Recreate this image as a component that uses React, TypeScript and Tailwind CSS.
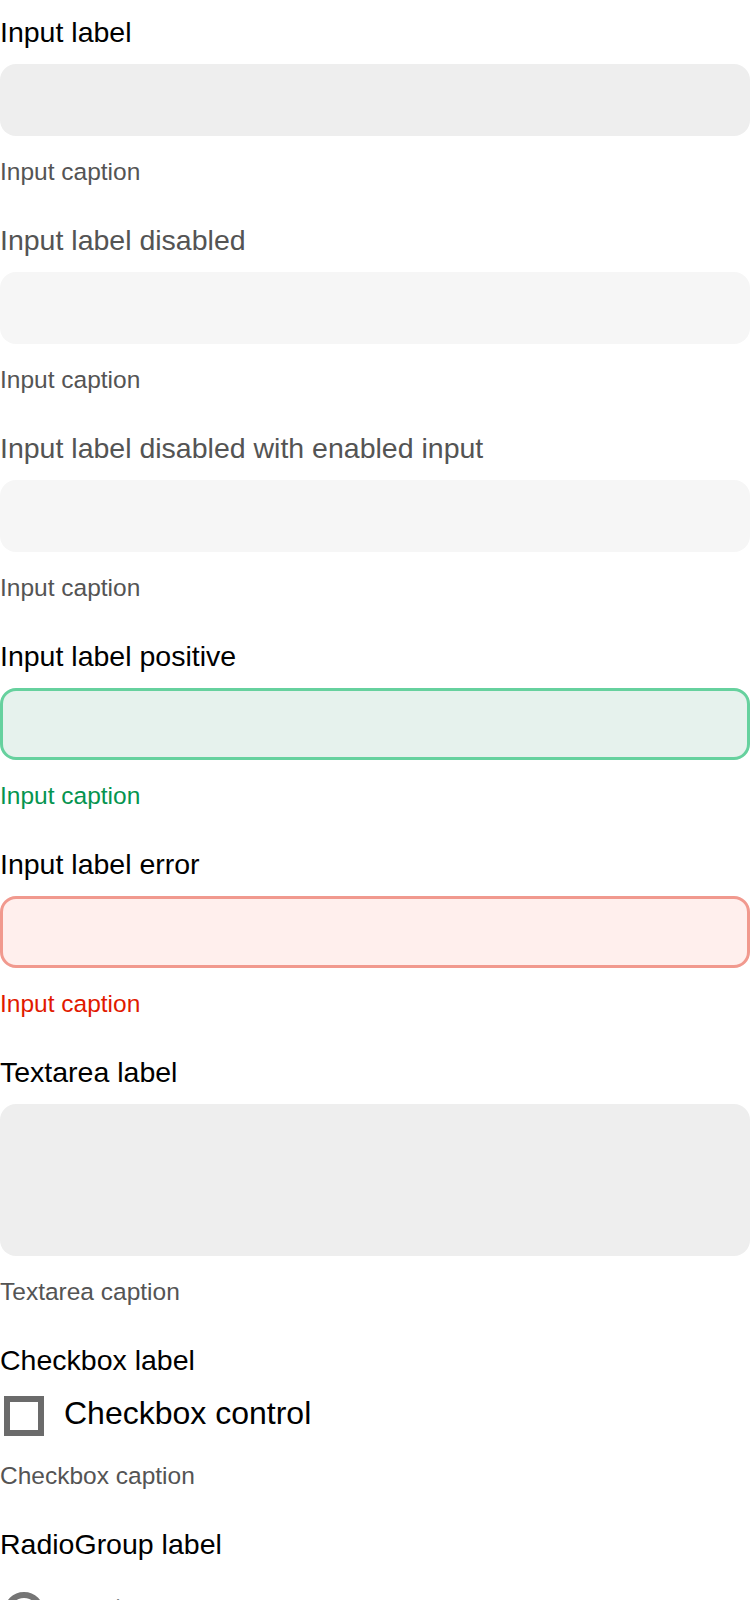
import React from 'react';

type FieldProps = {
  label: string;
  caption: string;
  labelColor?: string;
  captionColor?: string;
  children: React.ReactNode;
};

const Field = ({ label, caption, labelColor = 'text-black', captionColor = 'text-[#545454]', children }: FieldProps) => {
  return (
    <div className="mb-[32px]">
      {/* Label */}
      <label className={`block text-[28.5px] leading-[32px] mb-[16px] ${labelColor}`}>{label}</label>

      {children}

      {/* Caption */}
      <div className={`mt-[16px] text-[24.5px] leading-[40px] ${captionColor}`}>{caption}</div>
    </div>
  );
};

const inputBase = 'block w-full h-[72px] rounded-[16px] outline-none px-[28px] text-[28px]';

export default function App() {
  return (
    <div className="pt-[16px] bg-white font-['Liberation_Sans',Arial,sans-serif] text-black">
      <Field label="Input label" caption="Input caption">
        <input className={`${inputBase} bg-[#eeeeee]`} />
      </Field>

      <Field label="Input label disabled" caption="Input caption" labelColor="text-[#545454]">
        <input disabled className={`${inputBase} bg-[#f6f6f6]`} />
      </Field>

      <Field label="Input label disabled with enabled input" caption="Input caption" labelColor="text-[#545454]">
        <input className={`${inputBase} bg-[#f6f6f6]`} />
      </Field>

      <Field label="Input label positive" caption="Input caption" captionColor="text-[#05944f]">
        <input className={`${inputBase} bg-[#e6f2ed] border-[3px] border-[#66d19e]`} />
      </Field>

      <Field label="Input label error" caption="Input caption" captionColor="text-[#e11900]">
        <input className={`${inputBase} bg-[#ffefed] border-[3px] border-[#f1998e]`} />
      </Field>

      <Field label="Textarea label" caption="Textarea caption">
        <textarea className="block w-full h-[152px] rounded-[16px] bg-[#eeeeee] outline-none resize-none p-[20px] text-[28px]" />
      </Field>

      <Field label="Checkbox label" caption="Checkbox caption">
        <div className="flex items-start">
          <span className="m-[4px] w-[40px] h-[40px] shrink-0 border-[6px] border-[#6b6b6b] bg-white" />
          <span className="ml-[16px] pt-[1px] text-[32px] leading-[40px]">Checkbox control</span>
        </div>
      </Field>

      <Field label="RadioGroup label" caption="RadioGroup caption">
        <div className="flex flex-col">
          {['custom', 'second', 'third'].map((r) => (
            <div key={r} className="flex items-start mt-[12px]">
              <span className="m-[4px] w-[40px] h-[40px] shrink-0 rounded-full border-[6px] border-[#757575] bg-white" />
              <span className="ml-[16px] pt-[1px] text-[32px] leading-[40px]">{r}</span>
            </div>
          ))}
        </div>
      </Field>
    </div>
  );
}
